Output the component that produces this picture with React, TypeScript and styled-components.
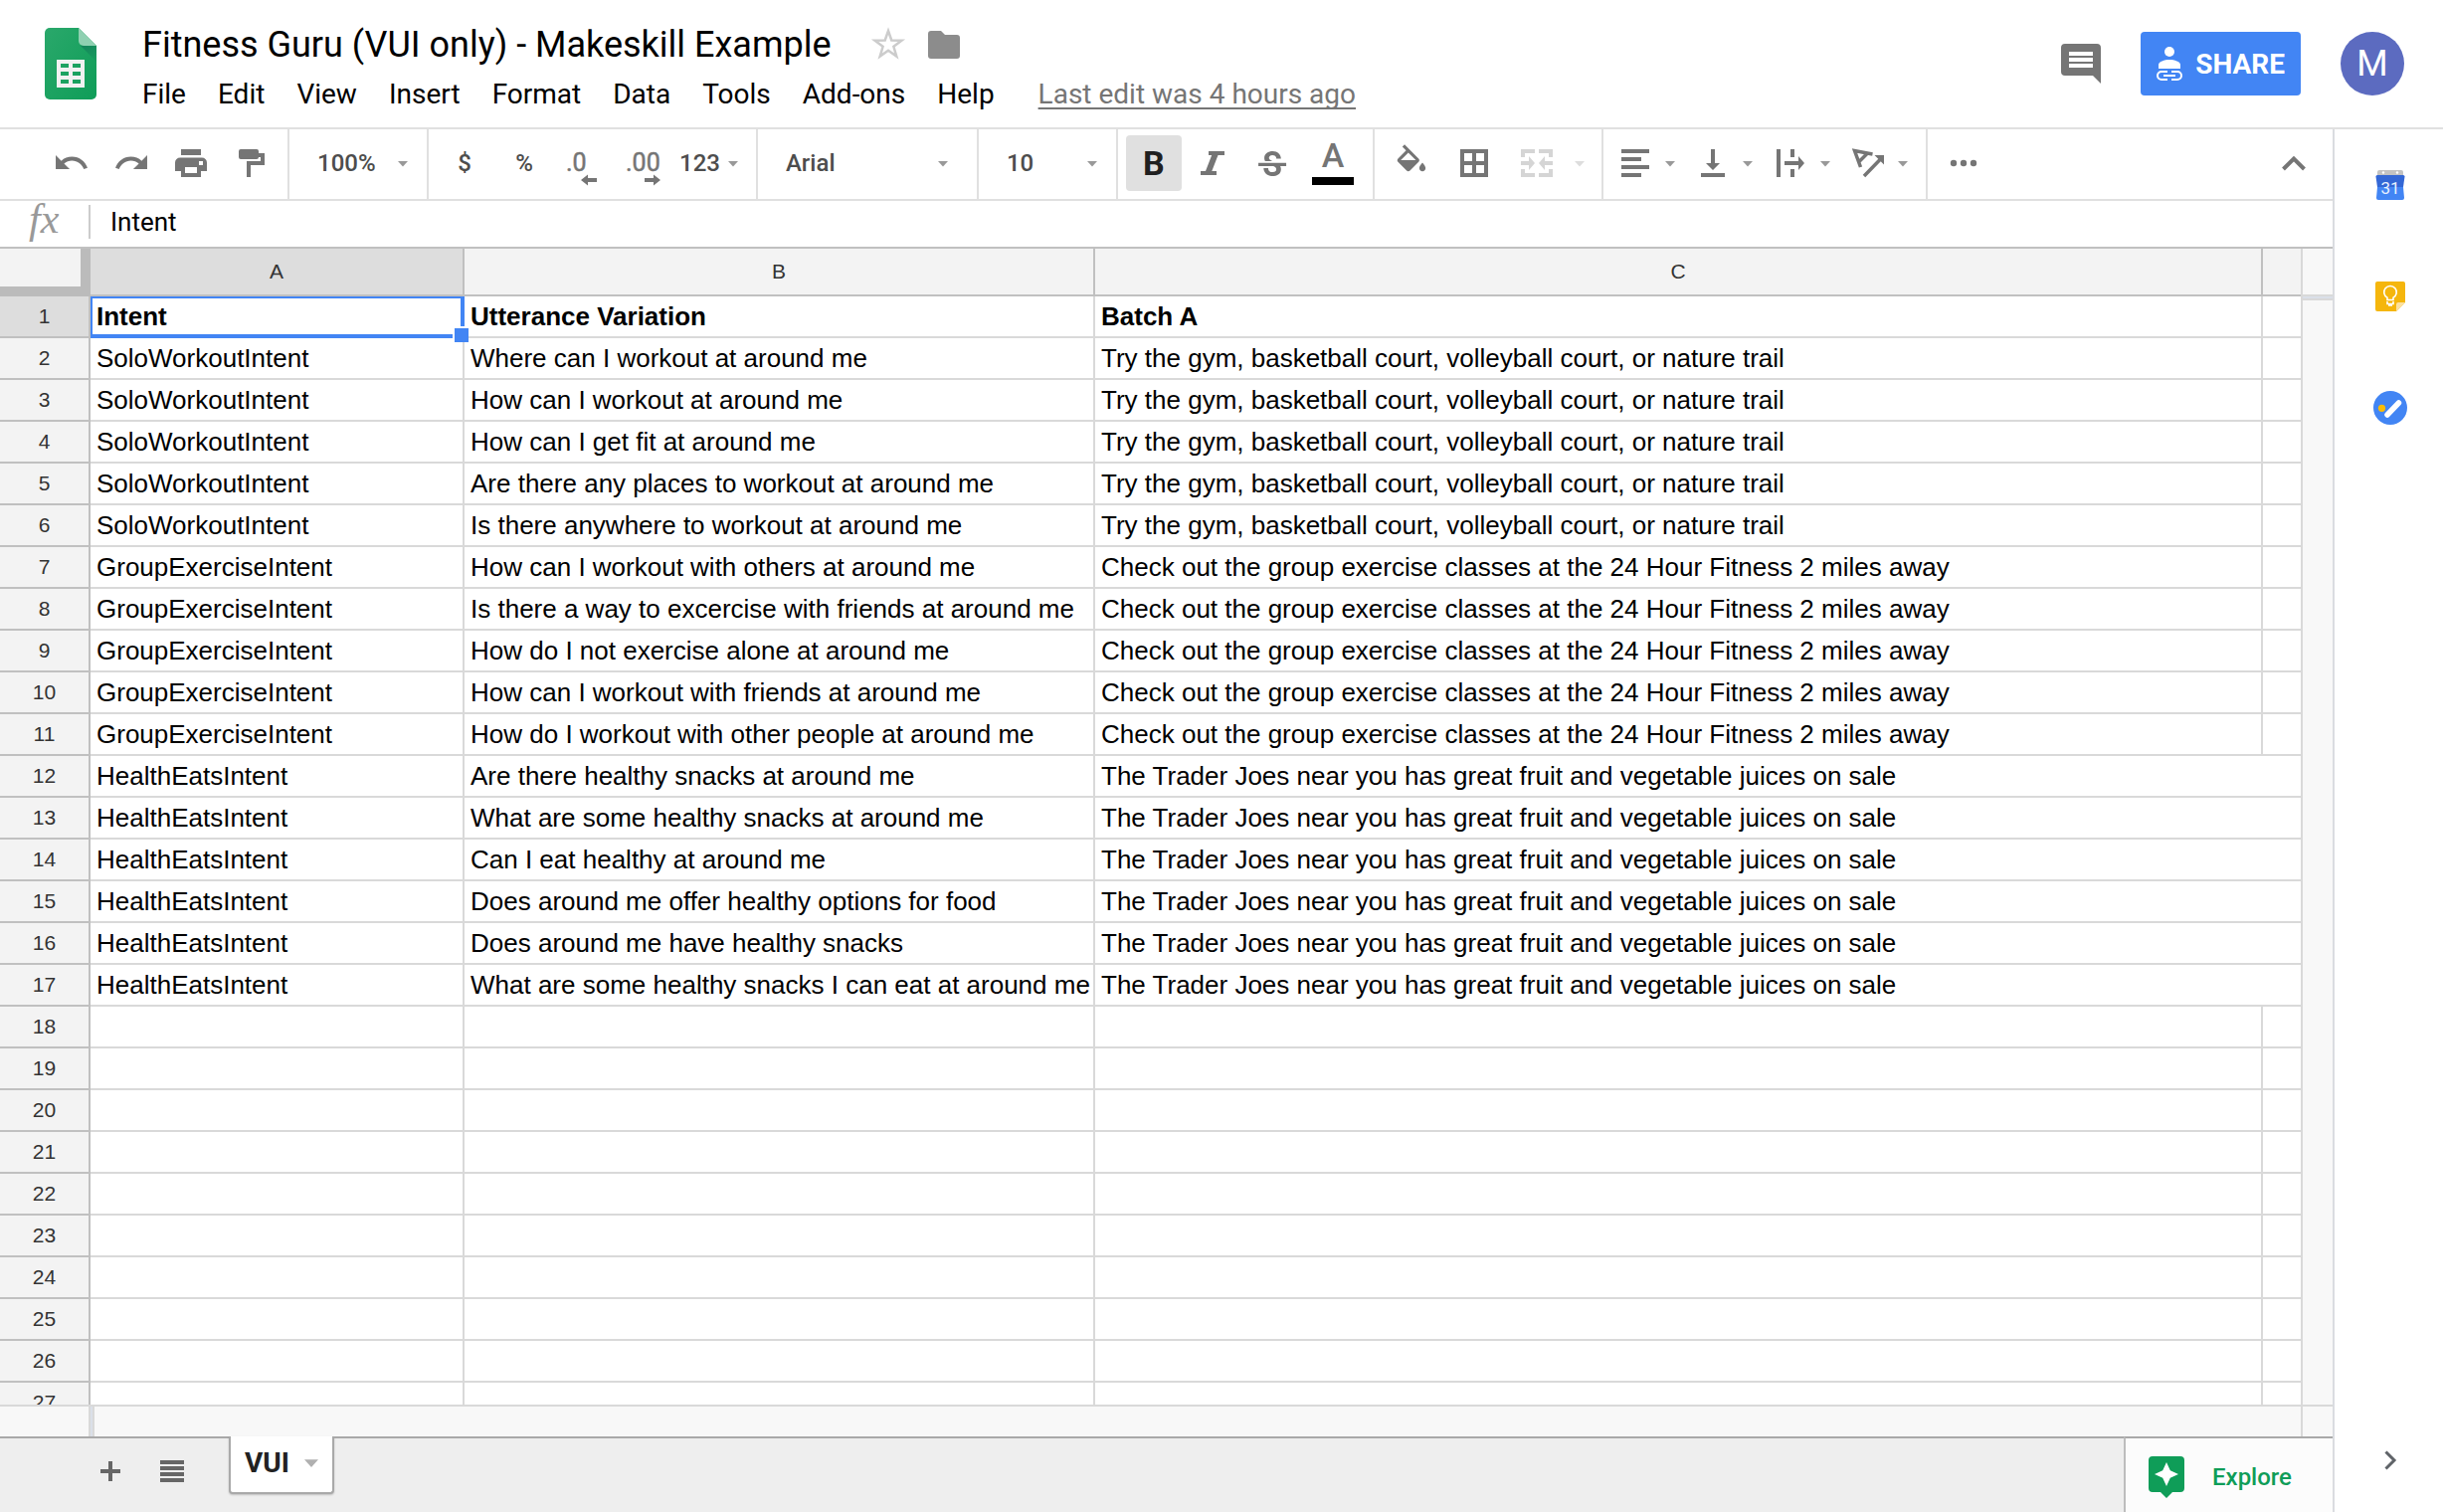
import React from "react";
import styled, { createGlobalStyle } from "styled-components";

const UI_FONT = 'Roboto, "Liberation Sans", sans-serif';
const CELL_FONT = '"Liberation Sans", Arial, sans-serif';
const ICON = "#757575";
const LINE = "#e0e0e0";
const GRID = "#d9d9d9";
const HEAD = "#c0c0c0";

const GlobalStyle = createGlobalStyle`
  * { box-sizing: border-box; }
  body { margin: 0; background: #fff; font-family: ${UI_FONT}; color: #000; }
  button, input, select { font: inherit; color: inherit; border: 0; margin: 0; padding: 0; background: none; }
  svg { display: block; flex: none; overflow: visible; }
`;

const Page = styled.div`
  display: flex;
  flex-direction: column;
  height: 100vh;
  overflow: hidden;
`;

/* ---------- document header ---------- */

const Header = styled.header`
  display: flex;
  align-items: flex-start;
  border-bottom: 2px solid ${LINE};
`;

const LogoLink = styled.a`
  padding: 28px 46px 0 45px;
`;

const HeaderText = styled.div`
  flex: 1;
  padding: 21px 0 13px;
`;

const TitleRow = styled.div`
  display: flex;
  align-items: center;
  height: 48px;
`;

const DocTitle = styled.h1`
  margin: 0 40px 0 0;
  font-size: 36px;
  line-height: 48px;
  font-weight: 400;
  white-space: nowrap;
`;

const IconButton = styled.button`
  display: flex;
  align-items: center;
  justify-content: center;
  margin-right: 23px;
`;

const MenuBar = styled.nav`
  display: flex;
  gap: 32px;
  height: 40px;
  margin-top: 6px;
  line-height: 40px;
  font-size: 28px;
`;

const MenuItem = styled.button`
  white-space: nowrap;
`;

const LastEdit = styled.a`
  margin-left: 12px;
  color: ${ICON};
  text-decoration: underline;
  text-decoration-thickness: 2px;
  text-underline-offset: 4px;
  text-decoration-skip-ink: none;
  white-space: nowrap;
`;

const HeaderActions = styled.div`
  display: flex;
  align-items: center;
  gap: 40px;
  padding: 32px 39px 32px 0;
`;

const ActionIcon = styled.button`
  display: flex;
`;

const ShareButton = styled.button`
  display: flex;
  align-items: center;
  gap: 13px;
  height: 64px;
  padding: 0 16px;
  border-radius: 4px;
  background: #4285f4;
  color: #fff;
  font-size: 28px;
  font-weight: 700;
`;

const Avatar = styled.button`
  width: 64px;
  height: 64px;
  border-radius: 50%;
  background: #5c6bc0;
  color: #fff;
  font-size: 36px;
`;

/* ---------- body ---------- */

const Body = styled.div`
  display: flex;
  flex: 1;
  min-height: 0;
`;

const Main = styled.main`
  display: flex;
  flex-direction: column;
  flex: 1;
  min-width: 0;
`;

const Toolbar = styled.div`
  display: flex;
  height: 72px;
  border-bottom: 2px solid ${LINE};
  color: #4d4d4d;
  font-size: 24px;
  font-weight: 500;
`;

const ToolGroup = styled.div<{ $start?: number; $end?: number; $last?: boolean }>`
  display: flex;
  align-items: center;
  gap: 4px;
  padding: 0 ${(p) => p.$end ?? 8}px 2px ${(p) => p.$start ?? 8}px;
  border-right: ${(p) => (p.$last ? "0" : `2px solid ${LINE}`)};
  flex: ${(p) => (p.$last ? "1" : "none")};
`;

const Tool = styled.button<{ $on?: boolean }>`
  display: flex;
  align-items: center;
  justify-content: center;
  width: 56px;
  height: 56px;
  border-radius: 4px;
  background: ${(p) => (p.$on ? "#e0e0e0" : "transparent")};
`;

const Glyph = styled.span<{ $bold?: boolean }>`
  font-size: 34px;
  line-height: 40px;
  font-weight: ${(p) => (p.$bold ? 700 : 500)};
  color: ${(p) => (p.$bold ? "#202020" : ICON)};
`;

const ColorTool = styled(Tool)`
  flex-direction: column;
  justify-content: flex-start;
`;

const Swatch = styled.span`
  width: 42px;
  height: 8px;
  margin-top: 2px;
  background: #000;
`;

const MenuTool = styled.button<{ $gap?: number; $pad?: number }>`
  display: flex;
  align-items: center;
  gap: ${(p) => p.$gap ?? 12}px;
  height: 56px;
  padding: 0 10px 0 ${(p) => p.$pad ?? 6}px;
`;

const PushRight = styled.div`
  margin-left: auto;
`;

const Picker = styled.label<{ $width: number; $end: number }>`
  display: flex;
  align-items: center;
  width: ${(p) => p.$width}px;
  padding: 0 ${(p) => p.$end}px 2px 28px;
  border-right: 2px solid ${LINE};

  select {
    flex: 1;
    min-width: 0;
    height: 56px;
    appearance: none;
    outline: none;
  }
`;

const FormulaBar = styled.div`
  display: flex;
  align-items: center;
  height: 48px;
  padding-bottom: 4px;
  border-bottom: 2px solid ${HEAD};
`;

const Fx = styled.label`
  width: 91px;
  height: 34px;
  padding-left: 29px;
  border-right: 2px solid #ccc;
  color: #999;
  font: italic 42px/28px "Liberation Serif", serif;
`;

const FormulaInput = styled.input`
  flex: 1;
  height: 40px;
  padding: 0 20px;
  font-size: 26px;
  outline: none;
`;

/* ---------- sheet ---------- */

const SheetArea = styled.div`
  display: grid;
  grid-template-columns: 1fr 32px;
  grid-template-rows: 1fr 32px;
  flex: 1;
  min-height: 0;
`;

const GridView = styled.div`
  overflow: hidden;
`;

const Sheet = styled.table`
  width: 100%;
  table-layout: fixed;
  border-collapse: separate;
  border-spacing: 0;
  font-family: ${CELL_FONT};
`;

const Col = styled.col<{ $w?: number }>`
  width: ${(p) => (p.$w ? `${p.$w}px` : "auto")};
`;

const Corner = styled.td`
  height: 48px;
  padding: 0;
  background: #f3f3f3;
  border-right: 10px solid #bbb;
  border-bottom: 10px solid #bbb;
`;

const ColHead = styled.th<{ $on?: boolean; $open?: boolean }>`
  height: 48px;
  padding: 0;
  background: ${(p) => (p.$on ? "#ddd" : "#f3f3f3")};
  border-right: ${(p) => (p.$open ? 0 : 2)}px solid ${HEAD};
  border-bottom: 2px solid ${HEAD};
  color: #333;
  font-size: 21px;
  font-weight: 400;
`;

const RowHead = styled.th<{ $on?: boolean }>`
  height: 42px;
  padding: 0;
  background: ${(p) => (p.$on ? "#ddd" : "#f3f3f3")};
  border-right: 2px solid ${HEAD};
  border-bottom: 2px solid ${HEAD};
  color: #333;
  font-size: 21px;
  font-weight: 400;
`;

const Cell = styled.td<{ $bold?: boolean; $open?: boolean }>`
  position: relative;
  height: 42px;
  padding: 0 0 0 6px;
  border-right: ${(p) => (p.$open ? 0 : 2)}px solid ${GRID};
  border-bottom: 2px solid ${GRID};
  font-size: 26px;
  line-height: 30px;
  font-weight: ${(p) => (p.$bold ? 700 : 400)};
  white-space: nowrap;
`;

const Selection = styled.span`
  position: absolute;
  inset: 0 -2px -2px 0;
  border: solid #4285f4;
  border-width: 2px 4px 4px 2px;
  z-index: 1;

  &::after {
    content: "";
    position: absolute;
    right: -8px;
    bottom: -8px;
    width: 14px;
    height: 14px;
    border: solid #fff;
    border-width: 2px 0 0 2px;
    background: #4285f4;
  }
`;

const VTrack = styled.div`
  border-left: 2px solid ${GRID};
  background: #f8f8f8;
  padding-top: 46px;
`;

const HTrack = styled.div`
  border-top: 2px solid ${GRID};
  background: #f8f8f8;
  padding-left: 89px;
`;

const TrackCorner = styled.div`
  border: solid ${GRID};
  border-width: 2px 0 0 2px;
  background: #f8f8f8;
`;

const VHandle = styled.div`
  height: 6px;
  border: solid ${GRID};
  border-width: 2px 0;
  background: #dadfe8;
`;

const HHandle = styled.div`
  width: 6px;
  height: 100%;
  border: solid ${GRID};
  border-width: 0 2px;
  background: #dadfe8;
`;

/* ---------- tab strip ---------- */

const TabStrip = styled.footer`
  display: flex;
  height: 76px;
  background: #eee;
`;

const StripTools = styled.div`
  display: flex;
  align-items: center;
  width: 230px;
  padding: 0 32px 8px 90px;
  gap: 20px;
  border-top: 2px solid #a9a9a9;
`;

const StripButton = styled.button`
  display: flex;
  justify-content: center;
  width: 42px;
`;

const SheetTab = styled.button`
  display: flex;
  align-items: center;
  gap: 15px;
  height: 58px;
  padding: 0 14px 4px;
  border: 2px solid #a9a9a9;
  border-top: 0;
  border-radius: 0 0 4px 4px;
  background: #fff;
  box-shadow: 0 1px 2px rgba(0, 0, 0, 0.2);
  color: #222;
  font-size: 28px;
  font-weight: 700;
`;

const StripFill = styled.div`
  flex: 1;
  border-top: 2px solid #a9a9a9;
`;

const Explore = styled.button`
  display: flex;
  align-items: center;
  gap: 28px;
  width: 210px;
  padding: 4px 0 0 23px;
  border-top: 2px solid #a9a9a9;
  border-left: 2px solid #bdbdbd;
  background: #fcfcfc;
  color: #0f9d58;
  font-size: 24px;
  font-weight: 500;
`;

/* ---------- side panel ---------- */

const SidePanel = styled.aside`
  display: flex;
  flex-direction: column;
  align-items: center;
  gap: 56px;
  width: 111px;
  padding: 28px 0 24px 2px;
  border-left: 2px solid #dadce0;
`;

const SideButton = styled.button<{ $bottom?: boolean }>`
  display: flex;
  align-items: center;
  justify-content: center;
  width: 56px;
  height: 56px;
  margin-top: ${(p) => (p.$bottom ? "auto" : "0")};
`;

/* ---------- icons ---------- */

const Icon = ({ children, color = ICON }: { children: React.ReactNode; color?: string }) => (
  <svg width="36" height="36" viewBox="0 0 36 36" fill={color} aria-hidden="true">
    {children}
  </svg>
);

const Caret = ({ size = 10, color = "#999" }: { size?: number; color?: string }) => (
  <svg width={size} height={size} viewBox="0 0 10 10" fill={color} aria-hidden="true">
    <path d="M0 3h10L5 8.600z" />
  </svg>
);

const UNDO =
  "M12.500 8c-2.650 0-5.050.990-6.900 2.600L2 7v9h9l-3.620-3.620c1.390-1.160 3.160-1.880 5.120-1.880 3.540 0 6.550 2.310 7.600 5.500l2.370-.780C21.080 11.030 17.150 8 12.500 8z";

const SheetsLogo = () => (
  <svg width="52" height="72" viewBox="0 0 52 72" aria-hidden="true">
    <defs>
      <linearGradient id="sheet" x1="0" y1="0" x2="1" y2="1">
        <stop offset="0" stopColor="#2aa86b" />
        <stop offset="1" stopColor="#0f9d58" />
      </linearGradient>
      <linearGradient id="fold" x1="0" y1="0" x2="0.6" y2="1">
        <stop offset="0" stopColor="#14835a" />
        <stop offset="1" stopColor="#14835a" stopOpacity="0.2" />
      </linearGradient>
    </defs>
    <path d="M5 0h29l18 18v49a5 5 0 0 1-5 5H5a5 5 0 0 1-5-5V5a5 5 0 0 1 5-5z" fill="url(#sheet)" />
    <path d="M36 18h16v16z" fill="url(#fold)" />
    <path d="M34 0l18 18H39a5 5 0 0 1-5-5z" fill="#8fd0b1" />
    <path
      fillRule="evenodd"
      d="M12 32h28v28H12zM16 36v4h8v-4zM28 36v4h8v-4zM16 44v4h8v-4zM28 44v4h8v-4zM16 52v4h8v-4zM28 52v4h8v-4z"
      fill="#f1f1f1"
    />
  </svg>
);

const DecimalIcon = ({ digits, left }: { digits: string; left?: boolean }) => (
  <svg width="44" height="40" viewBox="0 0 44 40" fill={ICON} aria-hidden="true">
    <text x="4" y="28" fontFamily={UI_FONT} fontSize="25" fontWeight="400" stroke={ICON} strokeWidth="0.500">
      {digits}
    </text>
    {left ? (
      <path d="M19 37l7-5.500v3.500h9v4h-9v3.500z" />
    ) : (
      <path d="M39 37l-7-5.500v3.500h-9v4h9v3.500z" />
    )}
  </svg>
);

/* ---------- data ---------- */

const menus = ["File", "Edit", "View", "Insert", "Format", "Data", "Tools", "Add-ons", "Help"];

const gym = "Try the gym, basketball court, volleyball court, or nature trail";
const group = "Check out the group exercise classes at the 24 Hour Fitness 2 miles away";
const food = "The Trader Joes near you has great fruit and vegetable juices on sale";

const data: string[][] = [
  ["Intent", "Utterance Variation", "Batch A"],
  ["SoloWorkoutIntent", "Where can I workout at around me", gym],
  ["SoloWorkoutIntent", "How can I workout at around me", gym],
  ["SoloWorkoutIntent", "How can I get fit at around me", gym],
  ["SoloWorkoutIntent", "Are there any places to workout at around me", gym],
  ["SoloWorkoutIntent", "Is there anywhere to workout at around me", gym],
  ["GroupExerciseIntent", "How can I workout with others at around me", group],
  ["GroupExerciseIntent", "Is there a way to excercise with friends at around me", group],
  ["GroupExerciseIntent", "How do I not exercise alone at around me", group],
  ["GroupExerciseIntent", "How can I workout with friends at around me", group],
  ["GroupExerciseIntent", "How do I workout with other people at around me", group],
  ["HealthEatsIntent", "Are there healthy snacks at around me", food],
  ["HealthEatsIntent", "What are some healthy snacks at around me", food],
  ["HealthEatsIntent", "Can I eat healthy at around me", food],
  ["HealthEatsIntent", "Does around me offer healthy options for food", food],
  ["HealthEatsIntent", "Does around me have healthy snacks", food],
  ["HealthEatsIntent", "What are some healthy snacks I can eat at around me", food],
];

const ROWS = 27;
const rows = Array.from({ length: ROWS }, (_, i) => data[i] ?? ["", "", ""]);

/* ---------- sections ---------- */

const DocHeader = () => (
  <Header>
    <LogoLink href="#" aria-label="Sheets home">
      <SheetsLogo />
    </LogoLink>
    <HeaderText>
      <TitleRow>
        <DocTitle>Fitness Guru (VUI only) - Makeskill Example</DocTitle>
        <IconButton aria-label="Star">
          <svg width="34" height="34" viewBox="0 0 34 34" fill="none" stroke="#ccc" strokeWidth="2.500" aria-hidden="true">
            <path d="M17 3l3.300 9.500 10.200.200-8.100 6.100 2.900 9.800L17 22.700l-8.300 5.900 2.900-9.800-8.100-6.100 10.200-.200z" />
          </svg>
        </IconButton>
        <IconButton aria-label="Move to folder">
          <svg width="32" height="28" viewBox="0 0 32 28" fill="#8c8c8c" aria-hidden="true">
            <path d="M3 0h10l4 4h12a3 3 0 0 1 3 3v18a3 3 0 0 1-3 3H3a3 3 0 0 1-3-3V3a3 3 0 0 1 3-3z" />
          </svg>
        </IconButton>
      </TitleRow>
      <MenuBar>
        {menus.map((m) => (
          <MenuItem key={m}>{m}</MenuItem>
        ))}
        <LastEdit href="#">Last edit was 4 hours ago</LastEdit>
      </MenuBar>
    </HeaderText>
    <HeaderActions>
      <ActionIcon aria-label="Comments">
        <svg width="40" height="40" viewBox="0 0 40 40" fill={ICON} aria-hidden="true">
          <path fillRule="evenodd" d="M4 0h32a4 4 0 0 1 4 4v36l-8-8H4a4 4 0 0 1-4-4V4a4 4 0 0 1 4-4zM8 8v4h24V8zM8 14v4h24v-4zM8 20v4h24v-4z" />
        </svg>
      </ActionIcon>
      <ShareButton>
        <svg width="26" height="34" viewBox="0 0 26 34" fill="#fff" aria-hidden="true">
          <circle cx="13" cy="5" r="5" />
          <path d="M2 22v-4c0-3 6-5 11-5s11 2 11 5v4z" />
          <path
            d="M11 25H5a4 4 0 0 0 0 8h6M15 25h6a4 4 0 0 1 0 8h-6M7 29h12"
            fill="none"
            stroke="#fff"
            strokeWidth="2"
          />
        </svg>
        SHARE
      </ShareButton>
      <Avatar aria-label="Account M">M</Avatar>
    </HeaderActions>
  </Header>
);

const SheetToolbar = () => (
  <Toolbar>
    <ToolGroup $start={44} $end={9}>
      <Tool aria-label="Undo">
        <Icon>
          <path transform="translate(-1.100 -0.900) scale(1.560)" d={UNDO} />
        </Icon>
      </Tool>
      <Tool aria-label="Redo">
        <Icon>
          <path transform="translate(37.100 -0.900) scale(-1.560 1.560)" d={UNDO} />
        </Icon>
      </Tool>
      <Tool aria-label="Print">
        <Icon>
          <path
            fillRule="evenodd"
            d="M8 4h20v6H8zM7 12.500h22a5 5 0 0 1 5 5V26h-6v6H8v-6H2v-8.500a5 5 0 0 1 5-5zM12 22v6h12v-6zM26 16v4h4v-4z"
          />
        </Icon>
      </Tool>
      <Tool aria-label="Paint format">
        <Icon>
          <path d="M8 4h16a2 2 0 0 1 2 2v2h6v12H18v12h-4V16h14v-4h-2a2 2 0 0 1-2 2H8a2 2 0 0 1-2-2V6a2 2 0 0 1 2-2z" />
        </Icon>
      </Tool>
    </ToolGroup>
    <Picker $width={140} $end={19}>
      <select aria-label="Zoom" defaultValue="100%">
        <option>100%</option>
      </select>
      <Caret />
    </Picker>
    <ToolGroup>
      <Tool>$</Tool>
      <Tool>%</Tool>
      <Tool aria-label="Decrease decimal places">
        <DecimalIcon digits=".0" left />
      </Tool>
      <Tool aria-label="Increase decimal places">
        <DecimalIcon digits=".00" />
      </Tool>
      <MenuTool $gap={8} $pad={4}>
        123
        <Caret />
      </MenuTool>
    </ToolGroup>
    <Picker $width={222} $end={29}>
      <select aria-label="Font" defaultValue="Arial">
        <option>Arial</option>
      </select>
      <Caret />
    </Picker>
    <Picker $width={140} $end={19}>
      <select aria-label="Font size" defaultValue="10">
        <option>10</option>
      </select>
      <Caret />
    </Picker>
    <ToolGroup $end={12}>
      <Tool $on aria-pressed="true">
        <Glyph $bold>B</Glyph>
      </Tool>
      <Tool aria-label="Italic">
        <Icon>
          <path d="M13 6h16v4h-6.500l-6.200 16H21v4H5v-4h5l6.200-16H13z" />
        </Icon>
      </Tool>
      <Tool aria-label="Strikethrough">
        <Icon>
          <path
            transform="translate(-1.600 1) scale(1.556 1.667)"
            d="M6.850 7.080C6.850 4.370 9.450 3 12.240 3c1.640 0 3 .490 3.900 1.280.770.650 1.460 1.730 1.460 3.240h-3.010c0-.310-.050-.590-.150-.850-.290-.860-1.200-1.280-2.250-1.280-1.860 0-2.340 1.020-2.340 1.700 0 .480.250.880.740 1.210.380.250.770.480 1.410.700H7.390c-.210-.340-.540-.890-.540-1.920zM21 12v-2H3v2h9.620c1.150.450 1.960.750 1.960 1.970 0 1-.810 1.670-2.280 1.670-1.540 0-2.930-.540-2.930-2.510H6.400c0 .550.080 1.130.240 1.580.810 2.290 3.290 3.300 5.670 3.300 2.270 0 5.300-.890 5.300-4.050 0-.300-.010-1.160-.480-1.940H21V12z"
          />
        </Icon>
      </Tool>
      <ColorTool>
        <Glyph>A</Glyph>
        <Swatch />
      </ColorTool>
    </ToolGroup>
    <ToolGroup $start={12} $end={7}>
      <Tool aria-label="Fill color">
        <Icon>
          <path
            transform="translate(-4 -0.700) scale(1.580)"
            d="M16.560 8.940L7.620 0 6.210 1.410l2.380 2.380-5.150 5.150c-.590.590-.590 1.540 0 2.120l5.500 5.500c.290.290.680.440 1.060.440s.770-.150 1.060-.440l5.500-5.500c.590-.580.590-1.530 0-2.120zM5.210 10L10 5.210 14.790 10H5.210zM19 11.500s-2 2.170-2 3.500c0 1.100.900 2 2 2s2-.900 2-2c0-1.330-2-3.500-2-3.500z"
          />
        </Icon>
      </Tool>
      <Tool aria-label="Borders">
        <Icon>
          <path fillRule="evenodd" d="M4 4h28v28H4zM8 8v8h8V8zM20 8v8h8V8zM8 20v8h8v-8zM20 20v8h8v-8z" />
        </Icon>
      </Tool>
      <MenuTool aria-label="Merge cells" $gap={20} $pad={13} disabled>
        <Icon color="#d5d5d5">
          <path d="M2 4h14v4H6v4H2zM34 4H20v4h10v4h4zM2 32h14v-4H6v-4H2zM34 32H20v-4h10v-4h4zM2 16h8v-5l6 7-6 7v-5H2zM34 16h-8v-5l-6 7 6 7v-5h8z" />
        </Icon>
        <Caret color="#ddd" />
      </MenuTool>
    </ToolGroup>
    <ToolGroup>
      <MenuTool aria-label="Horizontal align">
        <Icon>
          <path d="M4 4h28v4H4zM4 12h20v4H4zM4 20h28v4H4zM4 28h20v4H4z" />
        </Icon>
        <Caret />
      </MenuTool>
      <MenuTool aria-label="Vertical align">
        <Icon>
          <path d="M16 4h4v14h5l-7 7-7-7h5zM6 28h24v4H6z" />
        </Icon>
        <Caret />
      </MenuTool>
      <MenuTool aria-label="Text wrapping">
        <Icon>
          <path d="M4 4h4v28H4zM18 4h4v8h-4zM18 24h4v8h-4zM12 16h14v-5l6 7-6 7v-5H12z" />
        </Icon>
        <Caret />
      </MenuTool>
      <MenuTool aria-label="Text rotation">
        <Icon>
          <path d="M22.500 9L4.500 5.500l6 16.500M17 8.500L8.500 17M14 31l16-16.500" fill="none" stroke={ICON} strokeWidth="3.500" />
          <path d="M24.500 10H34v9.500z" />
        </Icon>
        <Caret />
      </MenuTool>
    </ToolGroup>
    <ToolGroup $last $end={11}>
      <Tool aria-label="More">
        <Icon>
          <circle cx="8" cy="18" r="3.200" />
          <circle cx="18" cy="18" r="3.200" />
          <circle cx="28" cy="18" r="3.200" />
        </Icon>
      </Tool>
      <PushRight>
        <Tool aria-label="Hide the menus">
          <Icon>
            <path d="M7.500 24L18 13.500 28.500 24" fill="none" stroke={ICON} strokeWidth="4" />
          </Icon>
        </Tool>
      </PushRight>
    </ToolGroup>
  </Toolbar>
);

const SheetGrid = () => (
  <SheetArea>
    <GridView>
      <Sheet>
        <colgroup>
          <Col $w={91} />
          <Col $w={376} />
          <Col $w={634} />
          <Col $w={1174} />
          <Col />
        </colgroup>
        <thead>
          <tr>
            <Corner />
            <ColHead scope="col" $on>A</ColHead>
            <ColHead scope="col">B</ColHead>
            <ColHead scope="col">C</ColHead>
            <ColHead $open />
          </tr>
        </thead>
        <tbody>
          {rows.map((cells, r) => (
            <tr key={r}>
              <RowHead scope="row" $on={r === 0}>{r + 1}</RowHead>
              {cells.map((text, c) => (
                <Cell key={c} $bold={r === 0} $open={c === 2 && text === food}>
                  {text}
                  {r === 0 && c === 0 && <Selection />}
                </Cell>
              ))}
              <Cell $open />
            </tr>
          ))}
        </tbody>
      </Sheet>
    </GridView>
    <VTrack>
      <VHandle />
    </VTrack>
    <HTrack>
      <HHandle />
    </HTrack>
    <TrackCorner />
  </SheetArea>
);

const Tabs = () => (
  <TabStrip>
    <StripTools>
      <StripButton aria-label="Add sheet">
        <svg width="20" height="20" viewBox="0 0 20 20" fill="#666" aria-hidden="true">
          <path d="M8 0h4v8h8v4h-8v8H8v-8H0V8h8z" />
        </svg>
      </StripButton>
      <StripButton aria-label="All sheets">
        <svg width="24" height="22" viewBox="0 0 24 22" fill="#666" aria-hidden="true">
          <path d="M0 0h24v4H0zM0 6h24v4H0zM0 12h24v4H0zM0 18h24v4H0z" />
        </svg>
      </StripButton>
    </StripTools>
    <SheetTab>
      VUI
      <Caret size={14} color="#b0b0b0" />
    </SheetTab>
    <StripFill />
    <Explore>
      <svg width="36" height="42" viewBox="0 0 36 42" aria-hidden="true">
        <path d="M4 0h28a4 4 0 0 1 4 4v28a4 4 0 0 1-4 4h-8l-6 6-6-6H4a4 4 0 0 1-4-4V4a4 4 0 0 1 4-4z" fill="#0f9d58" />
        <path d="M18 6l3.800 8.200L30 18l-8.200 3.800L18 30l-3.800-8.200L6 18l8.200-3.800z" fill="#fff" />
      </svg>
      Explore
    </Explore>
  </TabStrip>
);

const Side = () => (
  <SidePanel>
    <SideButton aria-label="Calendar">
      <svg width="30" height="30" viewBox="0 0 30 30" aria-hidden="true">
        <path d="M4 0h22a2 2 0 0 1 2 2v4H2V2a2 2 0 0 1 2-2z" fill="#c2c2c2" />
        <circle cx="8" cy="2.500" r="1.200" fill="#fff" />
        <circle cx="22" cy="2.500" r="1.200" fill="#fff" />
        <path d="M2 5h26a1.500 1.500 0 0 1 1.500 1.500L28 17H2L.500 6.500A1.500 1.500 0 0 1 2 5z" fill="#3367d6" />
        <path d="M2 17h26l1 11a2 2 0 0 1-2 2H3a2 2 0 0 1-2-2z" fill="#4285f4" />
        <text x="15" y="24" textAnchor="middle" fontFamily={UI_FONT} fontSize="17" fill="#e8f0fe">
          31
        </text>
      </svg>
    </SideButton>
    <SideButton aria-label="Keep">
      <svg width="30" height="30" viewBox="0 0 30 30" aria-hidden="true">
        <path d="M2 0h26a2 2 0 0 1 2 2v19l-9 9H2a2 2 0 0 1-2-2V2a2 2 0 0 1 2-2z" fill="#f5b60d" />
        <path d="M30 21l-9 9v-7a2 2 0 0 1 2-2z" fill="#fce1a0" />
        <path
          d="M12 18.500v-2.200a6.300 6.300 0 1 1 6 0v2.200zM12 20v2.500h6V20M13 24h4"
          fill="none"
          stroke="#fff"
          strokeWidth="1.600"
        />
      </svg>
    </SideButton>
    <SideButton aria-label="Tasks">
      <svg width="34" height="34" viewBox="0 0 34 34" aria-hidden="true">
        <circle cx="17" cy="17" r="17" fill="#4285f4" />
        <path d="M14 24L25.500 12" stroke="#fff" strokeWidth="5.500" strokeLinecap="round" />
        <circle cx="8.500" cy="17.300" r="3.600" fill="#fbbc04" />
      </svg>
    </SideButton>
    <SideButton aria-label="Hide side panel" $bottom>
      <svg width="12" height="20" viewBox="0 0 12 20" fill="none" stroke="#5f6368" strokeWidth="3" aria-hidden="true">
        <path d="M1.500 1.500L10 10l-8.500 8.500" />
      </svg>
    </SideButton>
  </SidePanel>
);

export default function App() {
  return (
    <Page>
      <GlobalStyle />
      <DocHeader />
      <Body>
        <Main>
          <SheetToolbar />
          <FormulaBar>
            <Fx htmlFor="formula">fx</Fx>
            <FormulaInput id="formula" defaultValue="Intent" />
          </FormulaBar>
          <SheetGrid />
          <Tabs />
        </Main>
        <Side />
      </Body>
    </Page>
  );
}
